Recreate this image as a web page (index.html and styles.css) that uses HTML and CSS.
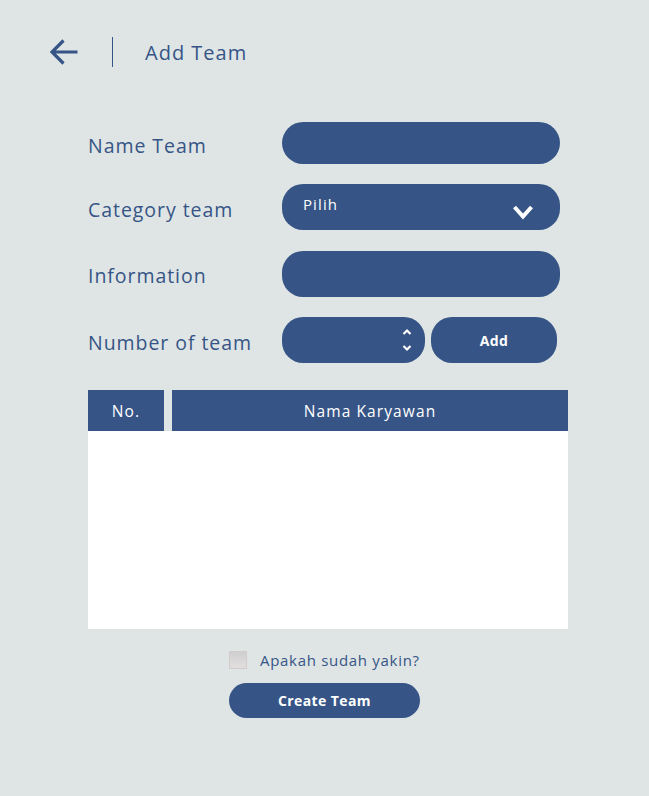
FILE: index.html
```html
<!DOCTYPE html>
<html>
<head>
<meta charset="utf-8">
<link rel="stylesheet" href="styles.css">
</head>
<body>
<div class="page">
  <header class="topbar">
    <svg class="back" width="31" height="30" viewBox="0 0 31 30">
      <path d="M29.5 15H4.5M15.5 3.5L4 15L15.5 26.5" fill="none" stroke="#365586" stroke-width="3.2" stroke-linecap="butt" stroke-linejoin="miter"/>
    </svg>
    <span class="divider"></span>
    <h1 class="title">Add Team</h1>
  </header>

  <form class="form">
    <label class="label">Name Team</label>
    <div class="field field-name"></div>

    <label class="label">Category team</label>
    <div class="field field-select">
      <span class="select-text">Pilih</span>
      <svg class="chev" width="22" height="18" viewBox="0 0 22 18">
        <path d="M2.5 4L11 13.5L19.5 4" fill="none" stroke="#fff" stroke-width="4"/>
      </svg>
    </div>

    <label class="label">Information</label>
    <div class="field field-info"></div>

    <label class="label">Number of team</label>
    <div class="number-row">
      <div class="field field-number">
        <svg class="spin" width="12" height="26" viewBox="0 0 12 26">
          <path d="M2.5 7L6 3.5L9.5 7M2.5 19L6 22.5L9.5 19" fill="none" stroke="#fff" stroke-width="2.2"/>
        </svg>
      </div>
      <button type="button" class="btn btn-add">Add</button>
    </div>
  </form>

  <div class="table">
    <div class="thead">
      <div class="th th-no">No.</div>
      <div class="th th-name">Nama Karyawan</div>
    </div>
    <div class="tbody"></div>
  </div>

  <div class="confirm">
    <span class="checkbox"></span>
    <span class="confirm-text">Apakah sudah yakin?</span>
  </div>
  <div class="actions">
    <button type="button" class="btn btn-create">Create Team</button>
  </div>
</div>
</body>
</html>
```

FILE: styles.css
```css
html, body {
  margin: 0;
  padding: 0;
  background: #dfe5e5;
}
body {
  font-family: "Open Sans", "Liberation Sans", sans-serif;
  color: #365586;
  width: 649px;
  height: 796px;
  overflow: hidden;
}
.page {
  padding-top: 37px;
}
.topbar {
  display: flex;
  align-items: center;
  padding-left: 48px;
  height: 30px;
}
.back {
  display: block;
}
.divider {
  width: 1px;
  height: 30px;
  background: #365586;
  margin-left: 33px;
}
.title {
  margin: 0 0 0 32px;
  font-size: 20px;
  font-weight: 400;
  line-height: 30px;
  letter-spacing: 1px;
  color: #365586;
  padding-top: 2px;
}
.form {
  margin: 55px 0 0 88px;
  display: grid;
  grid-template-columns: 194px 278px;
  row-gap: 20px;
  align-items: center;
}
.label {
  font-size: 19.5px;
  color: #365586;
  letter-spacing: 0.95px;
  padding-top: 4px;
}
.field {
  background: #365586;
  border-radius: 21px;
  height: 46px;
  box-sizing: border-box;
}
.field-name {
  height: 42px;
}
.field-info {
  margin-top: 1px;
}
.field-select {
  display: flex;
  align-items: flex-start;
  justify-content: space-between;
  padding: 10px 26px 0 21px;
}
.select-text {
  color: #fff;
  font-size: 15px;
  line-height: 20px;
  letter-spacing: 1.1px;
}
.chev {
  margin-top: 9px;
}
.number-row {
  display: flex;
  gap: 6px;
  height: 46px;
}
.field-number {
  width: 143px;
  height: 46px;
  display: flex;
  align-items: center;
  justify-content: flex-end;
  padding-right: 12px;
}
.btn {
  border: none;
  background: #365586;
  color: #fff;
  font-family: "Open Sans", "Liberation Sans", sans-serif;
  font-weight: 700;
  font-size: 14px;
  cursor: pointer;
}
.btn-add {
  width: 126px;
  height: 46px;
  border-radius: 21px;
  padding: 0;
  letter-spacing: 0.4px;
}
.table {
  margin: 27px 0 0 88px;
  width: 480px;
}
.thead {
  display: flex;
  gap: 8px;
  height: 41px;
}
.th {
  background: #365586;
  color: #fff;
  font-size: 15.5px;
  letter-spacing: 1.1px;
  display: flex;
  align-items: center;
  justify-content: center;
}
.th-no {
  width: 76px;
}
.th-name {
  flex: 1;
}
.tbody {
  background: #fff;
  height: 198px;
}
.confirm {
  margin-top: 22px;
  display: flex;
  align-items: center;
  padding-left: 229px;
  height: 18px;
}
.checkbox {
  width: 18px;
  height: 18px;
  box-sizing: border-box;
  background: linear-gradient(#cfcfcf, #e2dede);
  border: 1px solid #d0cccc;
}
.confirm-text {
  margin-left: 13px;
  font-size: 15px;
  letter-spacing: 0.7px;
  color: #365586;
}
.actions {
  margin-top: 14px;
  padding-left: 229px;
}
.btn-create {
  width: 191px;
  height: 35px;
  border-radius: 18px;
  letter-spacing: 0.4px;
}
```
